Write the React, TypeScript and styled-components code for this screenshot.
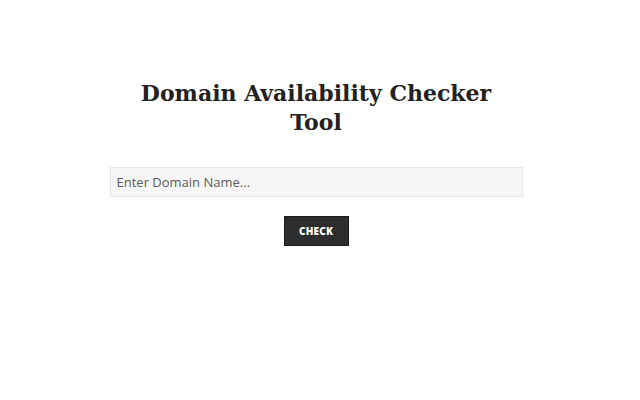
import React from 'react';
import styled, { createGlobalStyle } from 'styled-components';

const GlobalStyle = createGlobalStyle`
  html, body {
    margin: 0;
    padding: 0;
    background: #ffffff;
  }
  body {
    font-family: "Open Sans", "Liberation Sans", sans-serif;
  }
`;

const Page = styled.div`
  width: 640px;
  height: 400px;
  display: flex;
  flex-direction: column;
  align-items: center;
  padding: 79px 8px 0 0;
  box-sizing: border-box;
`;

const Title = styled.h1`
  margin: 0;
  width: 400px;
  text-align: center;
  font-family: "DejaVu Serif", "Liberation Serif", serif;
  font-weight: bold;
  font-size: 22px;
  line-height: 29px;
  color: #222222;
`;

const Form = styled.form`
  margin-top: 30px;
  width: 413px;
  display: flex;
  flex-direction: column;
  align-items: center;
  gap: 19px;
`;

const DomainInput = styled.input`
  width: 100%;
  height: 30px;
  box-sizing: border-box;
  padding: 0 6px;
  background: #f6f6f6;
  border: 1px solid #e8e8e8;
  font-family: "Open Sans", "Liberation Sans", sans-serif;
  font-size: 13px;
  color: #333;
  outline: none;

  &::placeholder {
    color: #5a5a5a;
  }
`;

const CheckButton = styled.button`
  width: 65px;
  height: 30px;
  background: #2d2d2d;
  border: 1px solid #1c1c1c;
  color: #ffffff;
  font-family: "Open Sans", "Liberation Sans", sans-serif;
  font-weight: 800;
  font-size: 10px;
  letter-spacing: 0.2px;
  text-transform: uppercase;
  cursor: pointer;
  padding: 0;
`;

export default function App() {
  return (
    <>
      <GlobalStyle />
      <Page>
        <Title>Domain Availability Checker Tool</Title>
        <Form onSubmit={(e) => e.preventDefault()}>
          <DomainInput type="text" placeholder="Enter Domain Name..." />
          <CheckButton type="submit">Check</CheckButton>
        </Form>
      </Page>
    </>
  );
}
